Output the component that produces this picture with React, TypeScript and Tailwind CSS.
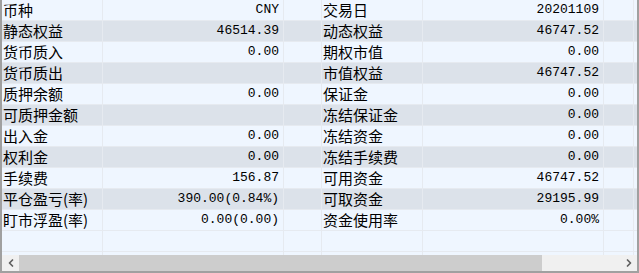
import { ChevronLeft, ChevronRight } from "lucide-react";

type Row = [string, string, string, string];

const rows: Row[] = [
  ["币种", "CNY", "交易日", "20201109"],
  ["静态权益", "46514.39", "动态权益", "46747.52"],
  ["货币质入", "0.00", "期权市值", "0.00"],
  ["货币质出", "", "市值权益", "46747.52"],
  ["质押余额", "0.00", "保证金", "0.00"],
  ["可质押金额", "", "冻结保证金", "0.00"],
  ["出入金", "0.00", "冻结资金", "0.00"],
  ["权利金", "0.00", "冻结手续费", "0.00"],
  ["手续费", "156.87", "可用资金", "46747.52"],
  ["平仓盈亏(率)", "390.00(0.84%)", "可取资金", "29195.99"],
  ["盯市浮盈(率)", "0.00(0.00)", "资金使用率", "0.00%"],
];

const labelFont = "font-['SimSun','Noto_Sans_CJK_SC',sans-serif] text-[15px] leading-[20px]";
const valueFont = "font-['Liberation_Mono','Noto_Sans_CJK_SC',monospace] text-[13px] leading-[20px]";

const TableRow = ({ row, odd }: { row: Row; odd: boolean }) => (
  <div
    className={`flex h-[21px] shrink-0 border-b border-[#e6eaf0] text-black ${
      odd ? "bg-[#dce2ea]" : "bg-[#eff6ff]"
    }`}
  >
    <div className={`w-[101px] border-r border-[#e6eaf0] pl-[1px] whitespace-nowrap overflow-hidden ${labelFont}`}>
      {row[0]}
    </div>
    <div className={`w-[181px] border-r border-[#e6eaf0] pr-[4px] text-right whitespace-nowrap ${valueFont}`}>
      {row[1]}
    </div>
    <div className="w-[38px] border-r border-[#e6eaf0]" />
    <div className={`w-[101px] border-r border-[#e6eaf0] pl-[1px] whitespace-nowrap overflow-hidden ${labelFont}`}>
      {row[2]}
    </div>
    <div className={`w-[181px] border-r border-[#e6eaf0] pr-[4px] text-right whitespace-nowrap ${valueFont}`}>
      {row[3]}
    </div>
    <div className="w-[30px] border-r border-[#e6eaf0]" />
  </div>
);

const ScrollBar = () => (
  <div className="flex h-[16px] shrink-0 bg-[#f0f0f0]">
    <div className="flex w-[17px] items-center justify-center text-[#606060]">
      <ChevronLeft size={12} strokeWidth={3.5} />
    </div>
    <div className="w-[523px] bg-[#cdcdcd]" />
    <div className="flex-1" />
    <div className="flex w-[17px] items-center justify-center text-[#606060]">
      <ChevronRight size={12} strokeWidth={3.5} />
    </div>
  </div>
);

const empty: Row = ["", "", "", ""];

export default function App() {
  return (
    <div className="flex h-[273px] w-[639px] flex-col border-x-2 border-b-2 border-[#a0a0a0] bg-[#eff6ff]">
      <div className="flex h-[255px] flex-col overflow-hidden">
        {rows.map((row, i) => (
          <TableRow key={i} row={row} odd={i % 2 === 1} />
        ))}
        <TableRow row={empty} odd={false} />
        <TableRow row={empty} odd={false} />
      </div>
      <ScrollBar />
    </div>
  );
}
